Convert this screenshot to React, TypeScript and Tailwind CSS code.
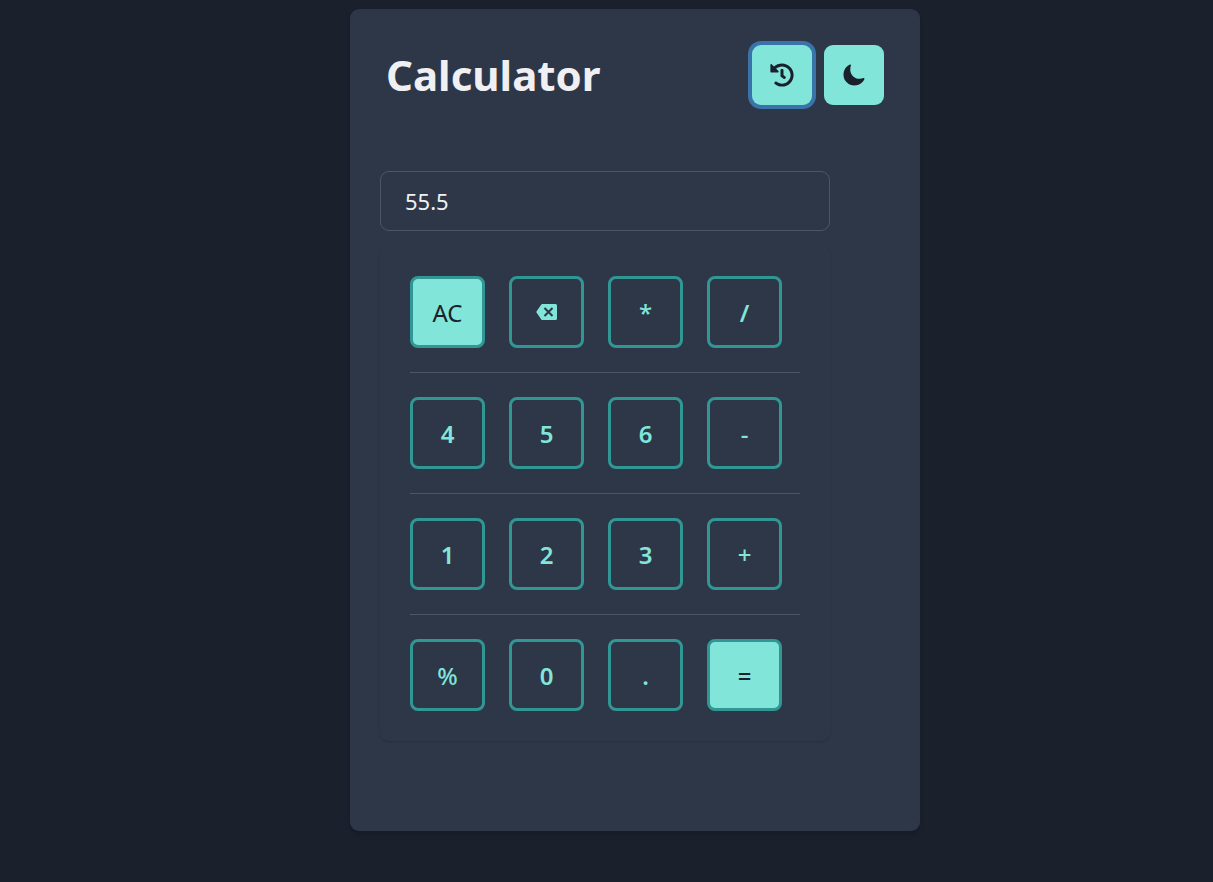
import { FaHistory } from "react-icons/fa";
import { IoMoon } from "react-icons/io5";
import type { ReactNode } from "react";

type Key = { label: ReactNode; name: string; solid?: boolean; weight?: string };

function BackspaceIcon() {
  return (
    <svg viewBox="0 0 24 24" className="size-6" aria-hidden="true">
      <path
        fill="currentColor"
        d="M7.500 4H20.500a1.500 1.500 0 0 1 1.500 1.500v13A1.500 1.500 0 0 1 20.500 20H7.500a1.500 1.500 0 0 1-1.200-.6L1.500 12.600a1 1 0 0 1 0-1.200L6.300 4.600A1.500 1.500 0 0 1 7.500 4z"
      />
      <path d="M9.500 8l8 8M17.500 8l-8 8" className="stroke-[#2d3748]" strokeWidth="2" />
    </svg>
  );
}

const rows: Key[][] = [
  [
    { label: "AC", name: "All clear", solid: true, weight: "font-normal" },
    { label: <BackspaceIcon />, name: "Backspace" },
    { label: "*", name: "Multiply", weight: "font-medium" },
    { label: "/", name: "Divide", weight: "font-semibold" },
  ],
  [
    { label: "4", name: "4" },
    { label: "5", name: "5" },
    { label: "6", name: "6" },
    { label: "-", name: "Subtract", weight: "font-medium" },
  ],
  [
    { label: "1", name: "1" },
    { label: "2", name: "2" },
    { label: "3", name: "3" },
    { label: "+", name: "Add", weight: "font-medium" },
  ],
  [
    { label: "%", name: "Percent", weight: "font-medium" },
    { label: "0", name: "0" },
    { label: ".", name: "Decimal point" },
    { label: "=", name: "Equals", solid: true, weight: "font-medium" },
  ],
];

export default function App() {
  return (
    <main className="min-h-screen bg-[#1a202c] pt-[9px] pl-[57px] font-['Noto_Sans','Open_Sans',sans-serif] text-[#f0f0f2]">
      <section className="mx-auto max-w-[570px] rounded-[9px] bg-[#2d3748] px-[30px] pt-9 pb-[90px] shadow-md">
        <header className="flex items-center justify-between px-[6px]">
          <h1 className="text-[42px] leading-[60px] font-bold">Calculator</h1>
          <div className="flex gap-3">
            <button
              type="button"
              aria-label="History"
              className="flex size-[60px] items-center justify-center rounded-[9px] bg-[#81e6d9] text-[#1a202c] ring-4 ring-[#3a73a9] outline-none"
            >
              <FaHistory size={24} />
            </button>
            <button
              type="button"
              aria-label="Toggle dark mode"
              className="flex size-[60px] items-center justify-center rounded-[9px] bg-[#81e6d9] text-[#1a202c]"
            >
              <IoMoon size={24} />
            </button>
          </div>
        </header>

        <div className="mt-[66px] max-w-[450px]">
          <input
            type="text"
            aria-label="Result"
            defaultValue="55.5"
            className="h-[60px] w-full rounded-[9px] border border-[#4d5667] bg-transparent px-6 text-[22px] outline-none"
          />
          <div className="mt-[15px] divide-y divide-[#4d5667] rounded-[9px] px-[30px] py-[6px] shadow-sm">
            {rows.map((row, i) => (
              <div key={i} className="flex gap-6 py-6">
                {row.map((key) => (
                  <button
                    key={key.name}
                    type="button"
                    aria-label={key.name}
                    className={`flex h-[72px] w-[75px] items-center justify-center rounded-[8px] border-[3px] border-[#319795] text-[24px] ${
                      typeof key.label === "string" ? "pt-[2px]" : ""
                    } ${key.solid ? "bg-[#81e6d9] text-[#1a202c]" : "text-[#81e6d9]"} ${
                      key.weight ?? "font-semibold"
                    }`}
                  >
                    {key.label}
                  </button>
                ))}
              </div>
            ))}
          </div>
        </div>
      </section>
    </main>
  );
}
